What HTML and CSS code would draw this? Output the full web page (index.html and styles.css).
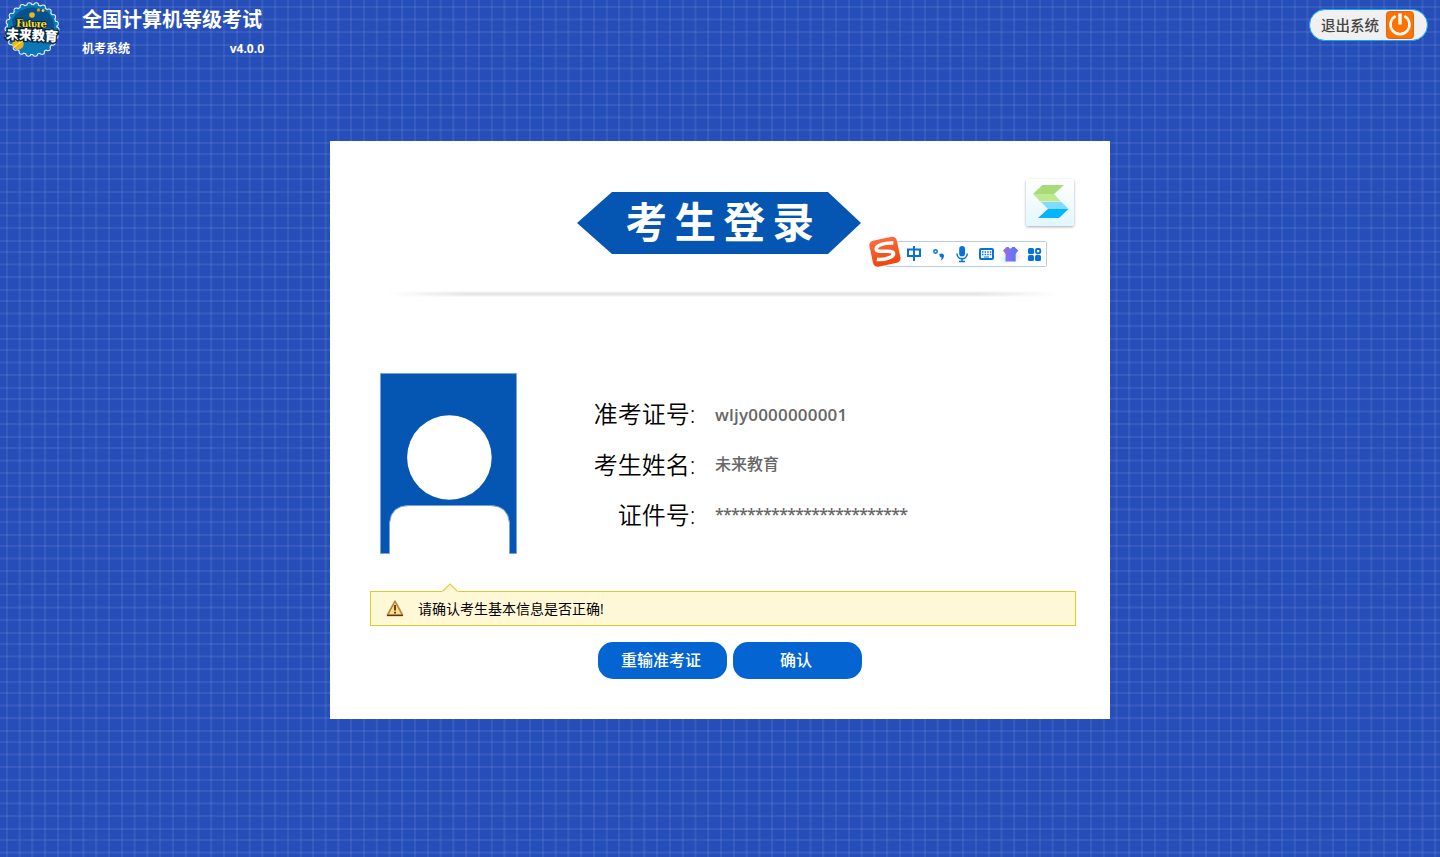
FILE: index.html
```html
<!DOCTYPE html>
<html lang="zh-CN">
<head>
<meta charset="utf-8">
<title>全国计算机等级考试</title>
<link rel="stylesheet" href="styles.css">
</head>
<body>
<header class="header">
  <div class="brand">
    <svg class="logo" viewBox="0 0 64 60" width="64" height="60">
      <circle cx="32" cy="29.500" r="24.500" fill="none" stroke="#e2f5ff" stroke-width="6" stroke-linecap="round" stroke-dasharray="0 7"/>
      <circle cx="32" cy="29.500" r="25.600" fill="#e2f5ff"/>
      <circle cx="32" cy="29.500" r="24.500" fill="#0b77b9" stroke="#0b77b9" stroke-width="4" stroke-linecap="round" stroke-dasharray="0 7"/>
      <path d="M12 20Q22 3 42 9Q54 14 54 28L14 29Z" fill="#07518f"/>
      <circle cx="32" cy="15" r="2.800" fill="#edb51e"/>
      <circle cx="38.500" cy="10" r="1.700" fill="#d99b17"/>
      <circle cx="43" cy="10.500" r="1.500" fill="#f0cf38"/>
      <circle cx="18" cy="44" r="5.700" fill="#edb51e"/>
      <path d="M14 47L22 41" stroke="#ffe36a" stroke-width="1.500"/>
      <text class="logo-en" x="16" y="27" textLength="31" transform="rotate(2 32 24)">Future</text>
      <text class="logo-cn" x="6" y="40" textLength="52" transform="rotate(3 32 36)">未来教育</text>
    </svg>
    <div class="brand-text">
      <div class="brand-title">全国计算机等级考试</div>
      <div class="brand-sub"><span>机考系统</span><span>v4.0.0</span></div>
    </div>
  </div>
  <button class="exit">
    <span>退出系统</span>
    <svg width="28" height="28" viewBox="0 0 28 28">
      <rect x=".5" y=".5" width="27" height="27" rx="3" fill="#ff7200" stroke="#d96a18"/>
      <path d="M9.600 5.200A9.500 9.500 0 1 0 18.400 5.200" fill="none" stroke="#fff" stroke-width="2.600"/>
      <path d="M14 2.500V13.500" stroke="#fff" stroke-width="3.400"/>
    </svg>
  </button>
</header>

<main class="panel">
  <div class="banner"><h1>考生登录</h1></div>
  <div class="divider"></div>

  <section class="info">
    <svg class="avatar" width="137" height="181" viewBox="0 0 137 181">
      <path d="M.5 .5H136.500V180.500H129.500V150Q128 132.500 110 132.500H29Q11 132.500 9.500 150V180.500H.5Z" fill="#0556b3" stroke="#78a3da"/>
      <circle cx="69.400" cy="84.500" r="42.300" fill="#fff"/>
    </svg>
    <dl class="fields">
      <dt>准考证号:</dt><dd class="ticket">wljy0000000001</dd>
      <dt>考生姓名:</dt><dd class="name">未来教育</dd>
      <dt>证件号:</dt><dd class="stars">************************</dd>
    </dl>
  </section>

  <div class="notice">
    <svg class="notice-tip" width="16" height="9" viewBox="0 0 16 9"><path d="M0 9L8 1L16 9Z" fill="#fff8d7"/><path d="M1 8L8 1L15 8" fill="none" stroke="#e3cb3c" stroke-width="1.200"/></svg>
    <svg class="warn" width="18" height="17" viewBox="0 0 18 17">
      <path d="M9 1.200L16.500 15H1.500Z" fill="#ffe08a" stroke="#b98743" stroke-width="1.700" stroke-linejoin="round"/>
      <path d="M1 15.500H17" stroke="#5b3512" stroke-width="1.300"/>
      <path d="M9 5V10.500M9 11.800V13.500" stroke="#5b2d0c" stroke-width="1.800"/>
    </svg>
    <span class="notice-text">请确认考生基本信息是否正确!</span>
  </div>

  <div class="actions"><button class="btn">重输准考证</button><button class="btn">确认</button></div>

  <div class="translate">
    <svg width="36" height="34" viewBox="0 0 36 34">
      <path d="M9.500 0H31L21 9H0Z" fill="#a9da78"/>
      <path d="M0 9H21L28 16.500H7Z" fill="#bdea8f"/>
      <path d="M8 17H28.500L35.500 24H15Z" fill="#80dcff"/>
      <path d="M15 24H35.500L26 33H5Z" fill="#00b4ff"/>
    </svg>
  </div>

  <div class="ime">
    <svg width="180" height="32" viewBox="0 0 180 32">
      <defs>
        <linearGradient id="sogou" x2="0" y2="1"><stop stop-color="#fa6c3c"/><stop offset="1" stop-color="#ef450e"/></linearGradient>
        <linearGradient id="shirt"><stop stop-color="#a668dd"/><stop offset="1" stop-color="#4a79ff"/></linearGradient>
        <radialGradient id="mint"><stop stop-color="#b9f5f5"/><stop offset="1" stop-color="#fff" stop-opacity="0"/></radialGradient>
        <radialGradient id="pink"><stop stop-color="#ffdcf3"/><stop offset="1" stop-color="#fff" stop-opacity="0"/></radialGradient>
      </defs>
      <rect x="16.500" y="5.500" width="161" height="25" rx="1" fill="#fff" stroke="#b6cce6"/>
      <g transform="rotate(-12 16 16)">
        <rect x="2" y="2.500" width="28" height="26.500" rx="4.500" fill="url(#sogou)"/>
        <path d="M26 9C18 6.600 8.500 7.500 8 11.500C8 16 24 14.500 24 19C24 23.500 12 23.500 6.500 21.500" fill="none" stroke="#fff" stroke-width="3.600"/>
      </g>
      <path d="M39 13.500H51V20H39ZM45 10V25" fill="none" stroke="#0871d8" stroke-width="2"/>
      <circle cx="66.500" cy="15.500" r="1.700" fill="none" stroke="#0871d8" stroke-width="1.500"/>
      <path d="M70.500 18Q74.800 16.500 75 20Q74.500 23.500 71.500 24.500Q72.800 22.500 72.600 21.500Q70 21.500 70.500 18Z" fill="#0871d8"/>
      <rect x="90.200" y="10" width="5.800" height="10.500" rx="2.900" fill="#0871d8"/>
      <path d="M88 17.500C88 24.500 98.200 24.500 98.200 17.500M93 23V26M90 25.500H96" fill="none" stroke="#0871d8" stroke-width="1.500"/>
      <rect x="111" y="13" width="13" height="10" rx="1" fill="none" stroke="#0871d8" stroke-width="2"/>
      <path d="M113 16H122.500M113 18.500H122.500" fill="none" stroke="#0871d8" stroke-width="1.400" stroke-dasharray="1.500 1.100"/>
      <path d="M115 21H120" stroke="#0871d8"/>
      <circle cx="136" cy="23" r="8" fill="url(#mint)"/>
      <circle cx="148" cy="20" r="8" fill="url(#pink)"/>
      <path d="M137.500 11H139.500Q141.300 14 143.200 11H145.500L149.200 14.500L146.700 18V25.500H136.500V18L134 14.500Z" fill="url(#shirt)"/>
      <g fill="#0871d8"><rect x="159" y="12" width="6" height="6" rx="1.500"/><rect x="159" y="19" width="6" height="6" rx="1.500"/><rect x="166" y="19" width="6" height="6" rx="1.500"/></g>
      <rect x="167" y="13" width="4.200" height="4.200" rx="1.200" fill="none" stroke="#0871d8" stroke-width="1.900"/>
    </svg>
  </div>
</main>
</body>
</html>
```
FILE: styles.css
```css
* { box-sizing: border-box; }
body {
  margin: 0;
  height: 857px;
  overflow: hidden;
  font-family: "Open Sans", "Noto Sans CJK SC", sans-serif;
  background-color: #264eb9;
  background-image:
    repeating-linear-gradient(90deg, #ffffff13 0, #ffffff13 1.5px, transparent 2.2px, transparent 12.3px, #ffffff13 12.78px),
    repeating-linear-gradient(180deg, #ffffff13 0, #ffffff13 1.5px, transparent 2.2px, transparent 12.2px, #ffffff13 12.67px);
  background-size: 306px 857px, 1440px 49px;
  background-position: 6px 0, 0 6px;
}
button { border: 0; margin: 0; padding: 0; font-family: inherit; }
.header { display: flex; justify-content: space-between; height: 60px; }
.brand { display: flex; color: #fff; font-weight: 700; }
.logo { display: block; margin-right: 18px; }
.logo-en { font: 700 10px "DejaVu Serif", serif; fill: #f5e323; stroke: #10283e; stroke-width: 2px; paint-order: stroke; }
.logo-cn { font: 900 13.5px "Noto Sans CJK SC", sans-serif; fill: #fff; stroke: #071e38; stroke-width: 2.5px; paint-order: stroke; }
.brand-text { width: 182px; padding-top: 5px; }
.brand-title { font-size: 20px; line-height: 30px; white-space: nowrap; }
.brand-sub { display: flex; justify-content: space-between; font-size: 12px; line-height: 18px; margin-top: 5px; }
.exit {
  display: flex;
  align-items: center;
  width: 119px;
  height: 32px;
  margin: 9px 12px 0 0;
  padding-left: 11px;
  border: 1px solid #10aaf2;
  border-radius: 16px;
  background: #f0f0f0;
  color: #444;
  font-size: 14.5px;
  font-weight: 500;
}
.exit span { padding-bottom: 2px; }
.exit svg { margin-left: 7px; }
.panel {
  position: relative;
  width: 780px;
  height: 578px;
  margin: 81px auto 0;
  padding-top: 51px;
  background: #fff;
}
.banner {
  width: 284px;
  height: 62px;
  margin-left: 247px;
  background: #0556b3;
  clip-path: polygon(0 50%, 35px 0, 251px 0, 100% 50%, 251px 100%, 35px 100%);
}
.banner h1 { margin: 0; padding-left: 48.5px; color: #fff; font-size: 41.5px; line-height: 61px; letter-spacing: 7.5px; white-space: nowrap; }
.divider {
  height: 6px;
  margin: 37px 52px 0 57px;
  background:
    linear-gradient(90deg, #fff, #fff0 12%, #fff0 88%, #fff),
    linear-gradient(#fbfbfb, #e6e6e6 40%, #e6e6e6 60%, #fbfbfb);
}
.info { display: flex; padding: 76px 0 0 50px; }
.avatar { display: block; flex: none; }
.fields { display: grid; grid-template-columns: 110px auto; grid-auto-rows: 50.5px; column-gap: 19px; margin: 16px 0 0 69px; height: 165px; align-items: center; }
.fields dt { padding-right: .5px; text-align: right; font-size: 24px; font-weight: 350; line-height: 50px; color: #000; white-space: nowrap; }
.fields dd { margin: 0; font-size: 16px; font-weight: 600; line-height: 50px; color: #666; white-space: nowrap; }
.fields .ticket { font-size: 17px; font-weight: 650; letter-spacing: .2px; padding-top: 1px; }
.fields .name { font-weight: 500; padding-bottom: 2px; }
.fields .stars { letter-spacing: -.75px; padding-bottom: 3px; }
.notice {
  position: relative;
  display: flex;
  align-items: center;
  width: 706px;
  height: 35px;
  margin: 37px 0 0 40px;
  padding-left: 15px;
  border: 1px solid #e3cb27;
  background: #fff8d7;
  color: #000;
  font-size: 14px;
}
.notice-text { padding-bottom: 2px; }
.notice-tip { position: absolute; left: 71px; top: -9px; }
.warn { margin: 0 14px 0 0; }
.actions { display: flex; gap: 6px; margin: 16px 0 0 268px; }
.btn { width: 129px; height: 37px; padding: 0 3px 3px 0; border-radius: 15px; background: #0464d2; color: #fff; font-size: 16px; font-weight: 500; }
.translate {
  position: absolute;
  left: 696px;
  top: 38px;
  width: 48px;
  height: 47px;
  padding: 6px 0 0 7px;
  border-radius: 2px;
  background: linear-gradient(#fff, #e2f6ff);
  box-shadow: 0 1px 3px #0005;
}
.ime { position: absolute; left: 539px; top: 95px; }
.ime svg { display: block; }
```
